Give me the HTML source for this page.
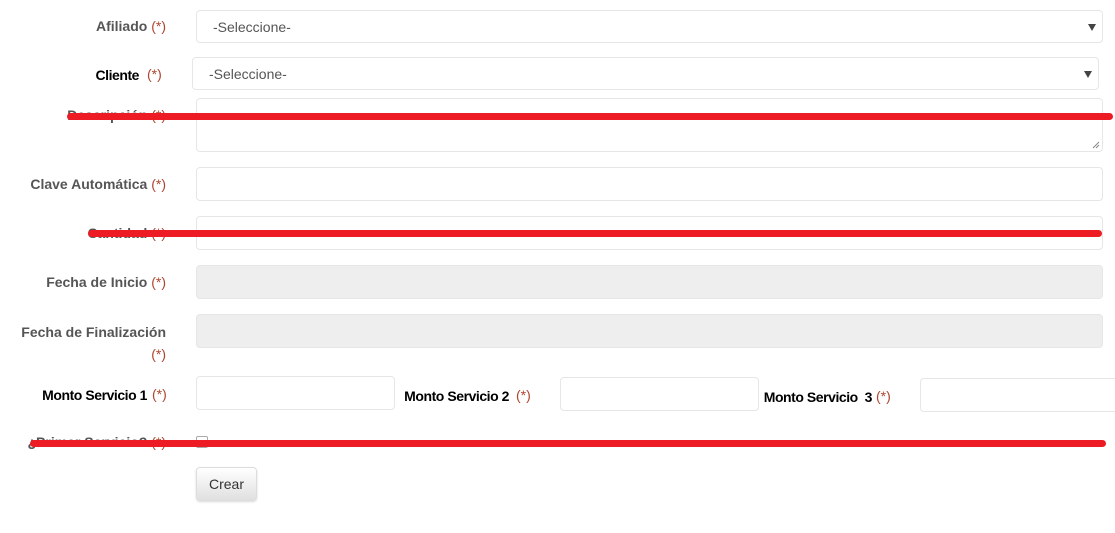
<!DOCTYPE html>
<html><head><meta charset="utf-8"><style>
body{margin:0;width:1115px;height:533px;background:#fff;position:relative;overflow:hidden;font-family:"Liberation Sans",Arial,sans-serif;}
.a{position:absolute;}
.box{position:absolute;border:1px solid #e6e6e6;border-radius:4px;box-sizing:border-box;background:#fff;}
.g{background:#eee;}
.lb{position:absolute;font-size:14px;font-weight:bold;color:#555;white-space:nowrap;line-height:16px;}
.lk{position:absolute;font-size:14px;font-weight:bold;color:#000;white-space:nowrap;line-height:16px;letter-spacing:-0.45px;text-align:right;}
.r{color:#b0452f;font-weight:normal;}
.sel{font-size:14px;color:#555;line-height:32px;padding-left:16px;}
.arr{position:absolute;right:6px;top:13px;width:0;height:0;border-left:4px solid transparent;border-right:4px solid transparent;border-top:7px solid #444;}
.red{position:absolute;background:#ed1c24;height:7px;border-radius:4px;}
</style></head><body>
<div class="lb" style="right:949px;top:18px">Afiliado <span class="r">(*)</span></div>
<div class="box sel" style="left:196px;top:10px;width:907px;height:33px">-Seleccione-<div class="arr"></div></div>

<div class="lk" style="right:976px;top:67px">Cliente</div><div class="lb" style="left:147px;top:66px"><span class="r">(*)</span></div>
<div class="box sel" style="left:192px;top:57px;width:907px;height:33px">-Seleccione-<div class="arr"></div></div>

<div class="lb" style="right:949px;top:107px">Descripción <span class="r">(*)</span></div>
<div class="box" style="left:196px;top:98px;width:907px;height:54px"><svg class="a" style="right:2px;bottom:2px" width="8" height="8"><path d="M1 7L7 1M4 7L7 4" stroke="#888" stroke-width="1"/></svg></div>
<div class="red" style="left:67px;top:113px;width:1046px"></div>

<div class="lb" style="right:949px;top:176px">Clave Automática <span class="r">(*)</span></div>
<div class="box" style="left:196px;top:167px;width:907px;height:34px"></div>

<div class="lb" style="right:949px;top:225px">Cantidad <span class="r">(*)</span></div>
<div class="box" style="left:196px;top:216px;width:907px;height:34px"></div>
<div class="red" style="left:88px;top:230px;width:1014px"></div>

<div class="lb" style="right:949px;top:274px">Fecha de Inicio <span class="r">(*)</span></div>
<div class="box g" style="left:196px;top:265px;width:907px;height:34px"></div>

<div class="lb" style="right:949px;top:321px;text-align:right;line-height:22px">Fecha de Finalización<br><span class="r">(*)</span></div>
<div class="box g" style="left:196px;top:314px;width:907px;height:34px"></div>

<div class="lk" style="right:968px;top:387px">Monto Servicio 1</div><div class="lb" style="left:152px;top:386px"><span class="r">(*)</span></div>
<div class="box" style="left:196px;top:376px;width:199px;height:34px"></div>
<div class="lk" style="right:606px;top:388px">Monto Servicio 2</div><div class="lb" style="left:516px;top:387px"><span class="r">(*)</span></div>
<div class="box" style="left:560px;top:377px;width:199px;height:34px"></div>
<div class="lk" style="right:243px;top:389px">Monto Servicio&nbsp; 3</div><div class="lb" style="left:876px;top:388px"><span class="r">(*)</span></div>
<div class="box" style="left:920px;top:378px;width:200px;height:34px"></div>

<div class="lb" style="right:949px;top:434px">¿Primer Servicio? <span class="r">(*)</span></div>
<div class="box" style="left:196px;top:436px;width:12px;height:12px;border-radius:2px;border-color:#aaa"></div>
<div class="red" style="left:30px;top:440px;width:1076px"></div>

<div class="box" style="left:196px;top:467px;width:61px;height:34px;background:linear-gradient(#fff,#e0e0e0);border-color:#ddd;box-shadow:0 1px 2px rgba(0,0,0,.15);font-size:14px;color:#333;text-align:center;line-height:32px">Crear</div>
</body></html>
